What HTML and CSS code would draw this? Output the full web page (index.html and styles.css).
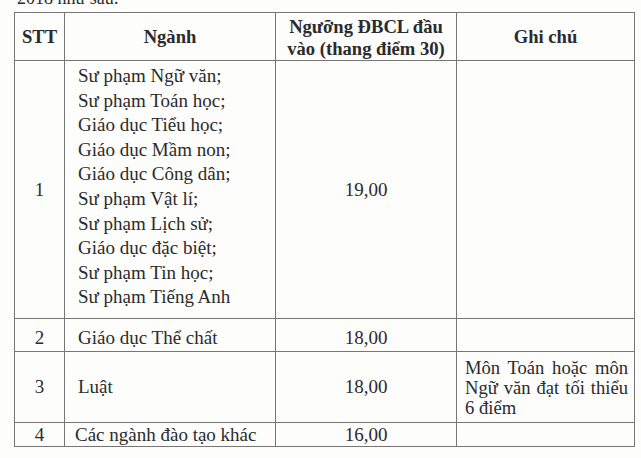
FILE: index.html
```html
<!DOCTYPE html>
<html>
<head>
<meta charset="utf-8">
<link rel="stylesheet" href="styles.css">
</head>
<body>
<div class="page">
  <p class="intro">2018 như sau:</p>
  <table class="grid">
    <colgroup>
      <col class="c-stt">
      <col class="c-nganh">
      <col class="c-nguong">
      <col class="c-note">
    </colgroup>
    <thead>
      <tr class="r-head">
        <th>STT</th>
        <th>Ngành</th>
        <th class="two">Ngưỡng ĐBCL đầu<br>vào (thang điểm 30)</th>
        <th>Ghi chú</th>
      </tr>
    </thead>
    <tbody>
      <tr class="r1">
        <td class="num">1</td>
        <td class="name list">Sư phạm Ngữ văn;<br>Sư phạm Toán học;<br>Giáo dục Tiểu học;<br>Giáo dục Mầm non;<br>Giáo dục Công dân;<br>Sư phạm Vật lí;<br>Sư phạm Lịch sử;<br>Giáo dục đặc biệt;<br>Sư phạm Tin học;<br>Sư phạm Tiếng Anh</td>
        <td class="score">19,00</td>
        <td class="note"></td>
      </tr>
      <tr class="r2">
        <td class="num">2</td>
        <td class="name">Giáo dục Thể chất</td>
        <td class="score">18,00</td>
        <td class="note"></td>
      </tr>
      <tr class="r3">
        <td class="num">3</td>
        <td class="name">Luật</td>
        <td class="score">18,00</td>
        <td class="note">Môn Toán hoặc môn Ngữ văn đạt tối thiểu 6 điểm</td>
      </tr>
      <tr class="r4">
        <td class="num">4</td>
        <td class="name tight">Các ngành đào tạo khác</td>
        <td class="score">16,00</td>
        <td class="note"></td>
      </tr>
    </tbody>
  </table>
</div>
</body>
</html>
```

FILE: styles.css
```css
html, body {
  margin: 0;
  padding: 0;
  background: #fdfdfc;
}

body {
  font-family: "Liberation Serif", "Times New Roman", serif;
  color: #2b2b2b;
  overflow: hidden;
}

.page {
  padding-left: 14px;
}

.intro {
  margin: -11px 0 0 3px;
  font-size: 18px;
  line-height: 18px;
  height: 18px;
}

.grid {
  margin-top: 5px;
  border-collapse: collapse;
  table-layout: fixed;
  width: 620px;
  border: 1px solid #767676;
  font-family: "Liberation Serif", "Times New Roman", serif;
  font-size: 19px;
}

.c-stt { width: 50px; }
.c-nganh { width: 211px; }
.c-nguong { width: 181px; }
.c-note { width: 178px; }

.grid th,
.grid td {
  border: 1px solid #767676;
  padding: 0;
  vertical-align: middle;
}

.grid th {
  font-weight: bold;
  font-size: 18.6px;
  text-align: center;
  line-height: 22px;
}

.grid th.two {
  padding-top: 2px;
}

.r-head { height: 48px; }
.r1 { height: 258px; }
.r2 { height: 33px; }
.r3 { height: 71px; }
.r4 { height: 24px; }

.num {
  text-align: center;
  line-height: 22px;
}

.name {
  padding-left: 13px !important;
  line-height: 22px;
}

.name.tight {
  padding-left: 10px !important;
}

.name.list {
  vertical-align: top !important;
  padding-top: 3px !important;
  line-height: 24.6px;
}

.r2 .num,
.r2 .name,
.r2 .score {
  padding-top: 5px !important;
}

.score {
  text-align: center;
  line-height: 22px;
}

.note {
  padding: 2px 6px 0 8px !important;
  font-size: 18.6px;
  line-height: 20px;
  text-align: justify;
}
```
